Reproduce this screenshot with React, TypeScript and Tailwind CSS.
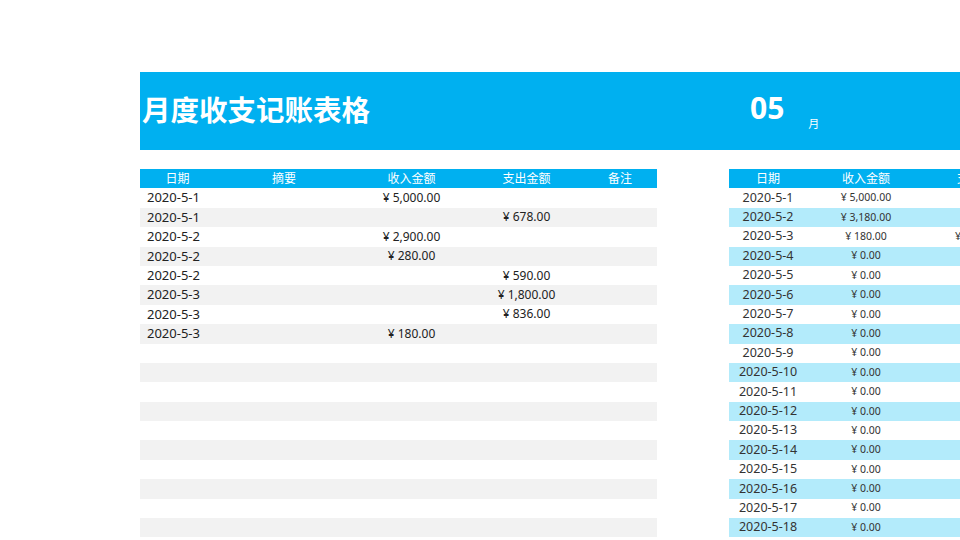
const F = { fontFamily: '"Noto Sans", "Noto Sans CJK SC", sans-serif' };
const left: [string, string, string][] = [
  ["2020-5-1", "¥ 5,000.00", ""],
  ["2020-5-1", "", "¥ 678.00"],
  ["2020-5-2", "¥ 2,900.00", ""],
  ["2020-5-2", "¥ 280.00", ""],
  ["2020-5-2", "", "¥ 590.00"],
  ["2020-5-3", "", "¥ 1,800.00"],
  ["2020-5-3", "", "¥ 836.00"],
  ["2020-5-3", "¥ 180.00", ""],
];
const rightInc: Record<number, string> = { 1: "¥ 5,000.00", 2: "¥ 3,180.00", 3: "¥ 180.00" };
export default function App() {
  const rows = Array.from({ length: 18 }, (_, i) => i);
  return (
    <div className="w-[960px] h-[540px] overflow-hidden bg-white relative" style={F}>
      <div className="h-[72px]" />
      <div className="ml-[140px] h-[78px] bg-[#00b0f0] flex items-center text-white">
        <div className="w-[610px] pl-[2px] text-[28.5px] font-semibold pb-[2px]">月度收支记账表格</div>
        <div className="text-[30px] font-bold leading-none pb-[6px]">05</div>
        <div className="ml-[24px] text-[11px] mt-[26px]">月</div>
      </div>
      <div className="h-[19px]" />
      <div className="flex">
        <div className="ml-[140px] w-[517px] text-[12.5px] text-[#222]">
          <div className="flex h-[19.4px] items-center bg-[#00b0f0] text-white text-[12px]">
            <div className="w-[75px] text-center">日期</div>
            <div className="w-[138px] text-center">摘要</div>
            <div className="w-[117px] text-center">收入金额</div>
            <div className="w-[113px] text-center">支出金额</div>
            <div className="w-[74px] text-center">备注</div>
          </div>
          {rows.map((i) => {
            const r = left[i];
            return (
              <div key={i} className={`flex h-[19.4px] items-center ${i % 2 ? "bg-[#f2f2f2]" : "bg-white"}`}>
                <div className="w-[75px] pl-[7px] text-[13px]">{r?.[0]}</div>
                <div className="w-[138px]" />
                <div className="w-[117px] text-center text-[12px]">{r?.[1]}</div>
                <div className="w-[113px] text-center text-[12px]">{r?.[2]}</div>
                <div className="w-[74px]" />
              </div>
            );
          })}
        </div>
        <div className="ml-[72px] w-[260px] shrink-0 text-[#333]">
          <div className="flex h-[19.4px] items-center bg-[#00b0f0] text-white text-[12px]">
            <div className="w-[78px] text-center">日期</div>
            <div className="w-[118px] text-center">收入金额</div>
            <div className="w-[64px] pl-[32px] whitespace-nowrap">支出金额</div>
          </div>
          {rows.map((i) => (
            <div key={i} className={`flex h-[19.4px] items-center ${i % 2 ? "bg-[#b3ebfb]" : "bg-white"}`}>
              <div className="w-[78px] text-center text-[12.5px]">2020-5-{i + 1}</div>
              <div className="w-[118px] text-center text-[10.5px]">{rightInc[i + 1] ?? "¥ 0.00"}</div>
              <div className="w-[64px] pl-[30px] text-[10.5px] whitespace-nowrap">{i === 2 ? "¥ 180.00" : ""}</div>
            </div>
          ))}
        </div>
      </div>
    </div>
  );
}
